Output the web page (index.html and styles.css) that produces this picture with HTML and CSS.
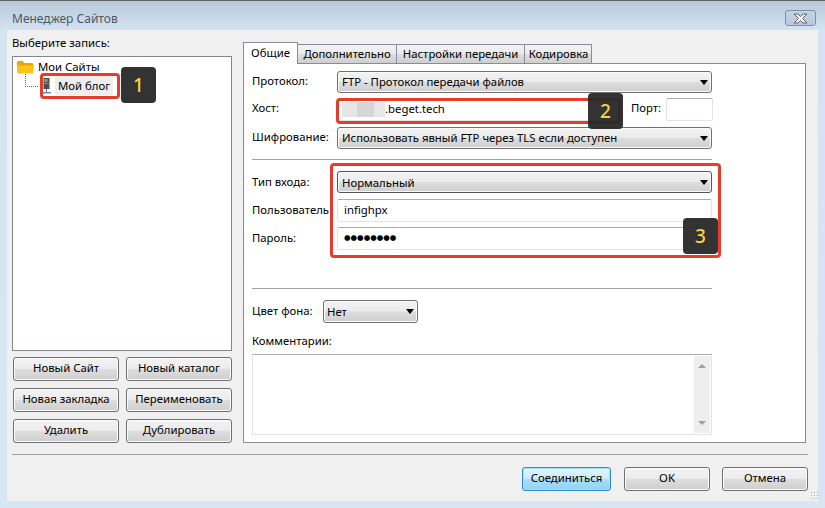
FILE: index.html
```html
<!DOCTYPE html>
<html lang="ru">
<head>
    <meta charset="UTF-8">
    <title>Менеджер Сайтов</title>
    <link rel="stylesheet" href="styles.css">
</head>
<body>
    <div class="window">
        <div class="titlebar">
            <span class="title">Менеджер Сайтов</span>
            <div class="close-btn">
                <svg width="17" height="11" viewBox="0 0 17 11">
                    <path d="M2 1h4l2.500 2.500L11 1h4l-4.500 4.500L15 10h-4L8.500 7.500 6 10H2l4.500-4.500z" fill="#f4f5f7" stroke="#5a6470" stroke-width="1"/>
                </svg>
            </div>
        </div>

        <div class="client">
            <div class="main">
                <div class="left">
                    <div class="left-label">Выберите запись:</div>
                    <div class="tree">
                        <div class="node">
                            <svg class="folder" width="17" height="13" viewBox="0 0 17 13">
                                <path d="M0 1.500Q0 0 1.500 0h4L7.500 2H15q1.500 0 1.500 1.500V5H0z" fill="#e8a800"/>
                                <path d="M0 4.500h16.500V11q0 1.500-1.500 1.500H1.500Q0 12.500 0 11z" fill="#fcc419"/>
                            </svg>
                            <span>Мои Сайты</span>
                        </div>
                        <div class="node node-child">
                            <div class="connector"></div>
                            <svg class="server" width="9" height="16" viewBox="0 0 9 16">
                                <rect x="1.500" y="0" width="6" height="11" fill="#4a4f4c"/>
                                <rect x="2.500" y="1" width="3" height="3" fill="#7fae6b"/>
                                <rect x="1.500" y="5" width="6" height="1" fill="#8a8f8c"/>
                                <rect x="4" y="11" width="1" height="3" fill="#3f78b5"/>
                                <rect x="0" y="14" width="9" height="1.500" fill="#5b93c9"/>
                            </svg>
                            <span class="node-selected">Мой блог</span>
                        </div>
                    </div>
                    <div class="left-buttons">
                        <div class="btn">Новый Сайт</div>
                        <div class="btn">Новый каталог</div>
                        <div class="btn">Новая закладка</div>
                        <div class="btn">Переименовать</div>
                        <div class="btn">Удалить</div>
                        <div class="btn">Дублировать</div>
                    </div>
                </div>

                <div class="right">
                    <div class="tabs">
                        <div class="tab tab-active">Общие</div>
                        <div class="tab tab-extra">Дополнительно</div>
                        <div class="tab tab-transfer">Настройки передачи</div>
                        <div class="tab tab-charset">Кодировка</div>
                    </div>
                    <div class="panel">
                        <div class="fields fields-server">
                            <label>Протокол:</label>
                            <div class="select">FTP - Протокол передачи файлов</div>
                            <label>Хост:</label>
                            <div class="host-row">
                                <div class="field field-host"><span class="blurred"></span>.beget.tech</div>
                                <label class="port-label">Порт:</label>
                                <div class="field field-port"></div>
                            </div>
                            <label>Шифрование:</label>
                            <div class="select">Использовать явный FTP через TLS если доступен</div>
                        </div>
                        <div class="separator sep-top"></div>
                        <div class="fields fields-login">
                            <label>Тип входа:</label>
                            <div class="select select-focus">Нормальный</div>
                            <label>Пользователь</label>
                            <div class="field">infighpx</div>
                            <label>Пароль:</label>
                            <div class="field field-password">●●●●●●●●</div>
                        </div>
                        <div class="separator sep-bottom"></div>
                        <div class="color-row">
                            <label>Цвет фона:</label>
                            <div class="select select-small">Нет</div>
                        </div>
                        <div class="comment-label">Комментарии:</div>
                        <div class="comment-box">
                            <div class="scrollbar">
                                <span class="arrow-up"></span>
                                <span class="arrow-down"></span>
                            </div>
                        </div>
                    </div>
                </div>
            </div>

            <div class="footer">
                <div class="btn btn-default">Соединиться</div>
                <div class="btn btn-ok">OK</div>
                <div class="btn btn-cancel">Отмена</div>
            </div>
            <div class="grip"></div>
        </div>

        <!-- пометки поверх скриншота -->
        <div class="mark mark-1"></div>
        <div class="mark mark-2"></div>
        <div class="mark mark-3"></div>
        <div class="badge badge-1">1</div>
        <div class="badge badge-2">2</div>
        <div class="badge badge-3">3</div>
    </div>
</body>
</html>
```

FILE: styles.css
```css
* {
    box-sizing: border-box;
}
body {
    margin: 0;
    font-family: "Noto Sans", "Open Sans", sans-serif;
    font-size: 11.35px;
    color: #000;
    background-color: #d8e5f2;
}
.window {
    position: relative;
    width: 825px;
    height: 508px;
    padding: 0 7px 7px;
    overflow: hidden;
    border-top: 1px solid #5f6468;
    background: linear-gradient(#b9c9d8, #d6e4f2 30px, #d8e5f2);
}
.titlebar {
    display: flex;
    align-items: flex-start;
    justify-content: space-between;
    height: 29px;
}
.title {
    margin: 10px 0 0 5px;
    font-size: 12px;
    line-height: 16px;
    color: #4a5866;
}
.close-btn {
    display: flex;
    align-items: center;
    justify-content: center;
    width: 31px;
    height: 16px;
    margin: 9px 2px 0 0;
    border: 1px solid #7f8fa8;
    border-radius: 3px;
    background: linear-gradient(#c5d3e2, #b9c9da);
}
.client {
    position: relative;
    height: 471px;
    padding: 5px 10px 0 5px;
    background-color: #f0f0f0;
}
.main {
    display: flex;
    gap: 11px;
    height: 408px;
}
.left {
    width: 220px;
}
.left-label {
    height: 21px;
    line-height: 15px;
}
.tree {
    height: 295px;
    padding: 2px 0 0 4px;
    border: 1px solid #828790;
    background-color: #fff;
}
.node {
    position: relative;
    display: flex;
    align-items: center;
    height: 17px;
    gap: 4px;
}
.node span {
    position: relative;
    top: -1px;
}
.node-child {
    height: 19px;
    margin-top: 1px;
    padding-left: 25px;
    gap: 5px;
}
.connector {
    position: absolute;
    left: 8px;
    top: -3px;
    width: 13px;
    height: 13px;
    border-left: 1px dotted #666;
    border-bottom: 1px dotted #666;
}
.server {
    position: relative;
    top: -1px;
}
.node-selected {
    padding: 0 3px;
    margin-left: -1px;
    line-height: 19px;
    background-color: #eeeeee;
}
.left-buttons {
    display: grid;
    grid-template-columns: 106px 106px;
    grid-auto-rows: 24px;
    gap: 7px;
    margin: 6px 0 0 1px;
}
.btn {
    display: flex;
    align-items: center;
    justify-content: center;
    height: 24px;
    padding-bottom: 3px;
    border: 1px solid #707070;
    border-radius: 3px;
    box-shadow: inset 0 0 0 1px #fbfbfb;
    background: linear-gradient(#f3f3f3, #ebebeb 48%, #dddddd 52%, #cfcfcf);
}
.right {
    width: 563px;
    padding-top: 7px;
}
.tabs {
    display: flex;
    align-items: flex-end;
    height: 21px;
}
.tab {
    position: relative;
    top: 1px;
    display: flex;
    align-items: center;
    justify-content: center;
    height: 20px;
    padding-bottom: 1px;
    border: 1px solid #898c95;
    border-left: 0;
    background: linear-gradient(#f2f2f2, #ebebeb 48%, #dddddd 52%, #cfcfcf);
}
.tab-active {
    z-index: 1;
    width: 55px;
    height: 22px;
    padding-bottom: 3px;
    border-left: 1px solid #898c95;
    border-bottom: 0;
    background: #fff;
}
.tab-extra {
    width: 99px;
}
.tab-transfer {
    width: 128px;
}
.tab-charset {
    width: 67px;
    padding-left: 1px;
}
.panel {
    height: 380px;
    padding: 7px 0 0 8px;
    border: 1px solid #898c95;
    background-color: #fff;
}
label {
    line-height: 19px;
    white-space: nowrap;
}
.fields {
    display: grid;
    grid-template-columns: 85px 375px;
    align-items: start;
}
.fields-server {
    grid-template-rows: 27px 29px 22px;
}
.fields-login {
    grid-template-rows: repeat(3, 28px);
}
.fields-login label,
.color-row label {
    line-height: 21px;
}
.select {
    position: relative;
    height: 22px;
    padding-left: 4px;
    line-height: 19px;
    border: 1px solid #707070;
    border-radius: 3px;
    box-shadow: inset 0 0 0 1px #fbfbfb;
    background: linear-gradient(#f3f3f3, #ebebeb 48%, #dddddd 52%, #cfcfcf);
}
.select::after {
    content: "";
    position: absolute;
    right: 3px;
    top: 8px;
    border-left: 4px solid transparent;
    border-right: 4px solid transparent;
    border-top: 5px solid #000;
}
.select-focus {
    line-height: 21px;
    border-color: #555;
}
.select-small {
    width: 95px;
    height: 23px;
    padding-left: 3px;
    line-height: 21px;
}
.field {
    height: 23px;
    padding-left: 6px;
    line-height: 19px;
    border: 1px solid #e2e3ea;
    border-top-color: #ababab;
    border-radius: 2px;
}
.field-password {
    padding-left: 6px;
    font-family: "DejaVu Sans", sans-serif;
    font-size: 7.5px;
    line-height: 20px;
}
.host-row {
    display: flex;
    align-items: flex-start;
    height: 23px;
}
.field-host {
    display: flex;
    align-items: center;
    flex-shrink: 0;
    width: 285px;
    padding: 0 0 2px 4px;
}
.blurred {
    width: 43px;
    height: 15px;
    margin-top: 2px;
    background: linear-gradient(90deg, #e6e6e6 36%, #d6d6d6 36%, #d6d6d6 74%, #e8e8e8 74%);
}
.port-label {
    flex-shrink: 0;
    width: 35px;
    margin-left: 9px;
}
.field-port {
    flex-shrink: 0;
    width: 47px;
}
.separator {
    width: 460px;
    height: 1px;
    background-color: #a0a0a0;
}
.sep-top {
    margin: 10px 0 11px;
}
.sep-bottom {
    margin: 33px 0 11px;
}
.color-row {
    display: grid;
    grid-template-columns: 71px 95px;
}
.comment-label {
    margin-top: 8px;
    line-height: 19px;
}
.comment-box {
    display: flex;
    justify-content: flex-end;
    width: 460px;
    height: 81px;
    margin-top: 4px;
    padding: 1px;
    border: 1px solid #e2e3ea;
    border-top-color: #ababab;
}
.scrollbar {
    display: flex;
    flex-direction: column;
    align-items: center;
    justify-content: space-between;
    width: 16px;
    padding: 8px 0;
    background-color: #eeeeee;
}
.arrow-up {
    border-left: 4px solid transparent;
    border-right: 4px solid transparent;
    border-bottom: 4px solid #a0a0a0;
}
.arrow-down {
    border-left: 4px solid transparent;
    border-right: 4px solid transparent;
    border-top: 4px solid #a0a0a0;
}
.footer {
    display: flex;
    justify-content: flex-end;
    height: 47px;
    margin-top: 11px;
    padding-top: 12px;
    border-top: 1px solid #a0a0a0;
}
.btn-default {
    width: 89px;
    margin-right: 13px;
    border-color: #2c8fc9;
    box-shadow: inset 0 0 0 1px #9fe3fb;
    background: linear-gradient(#e3f5fd, #c9ecfb 48%, #a8dff8 52%, #8fd3f3);
}
.btn-ok {
    width: 86px;
    margin-right: 12px;
}
.btn-cancel {
    width: 86px;
}
.grip {
    position: absolute;
    right: 0;
    bottom: 0;
    width: 8px;
    height: 10px;
    background-image: radial-gradient(#a8a8a8 40%, transparent 45%);
    background-size: 3px 3px;
}
.mark {
    position: absolute;
    border: 3px solid #e53c2e;
    border-radius: 4px;
}
.mark-1 {
    left: 40px;
    top: 72px;
    width: 80px;
    height: 26px;
}
.mark-2 {
    left: 336px;
    top: 97px;
    width: 285px;
    height: 26px;
}
.mark-3 {
    left: 330px;
    top: 162px;
    width: 391px;
    height: 95px;
}
.badge {
    position: absolute;
    display: flex;
    align-items: center;
    justify-content: center;
    width: 35px;
    height: 36px;
    border-radius: 4px;
    font-size: 19px;
    font-weight: 500;
    color: #f7d33f;
    background-color: rgba(40, 40, 40, 0.95);
}
.badge-1 {
    left: 121px;
    top: 66px;
}
.badge-2 {
    left: 588px;
    top: 92px;
}
.badge-3 {
    left: 683px;
    top: 217px;
}
```
